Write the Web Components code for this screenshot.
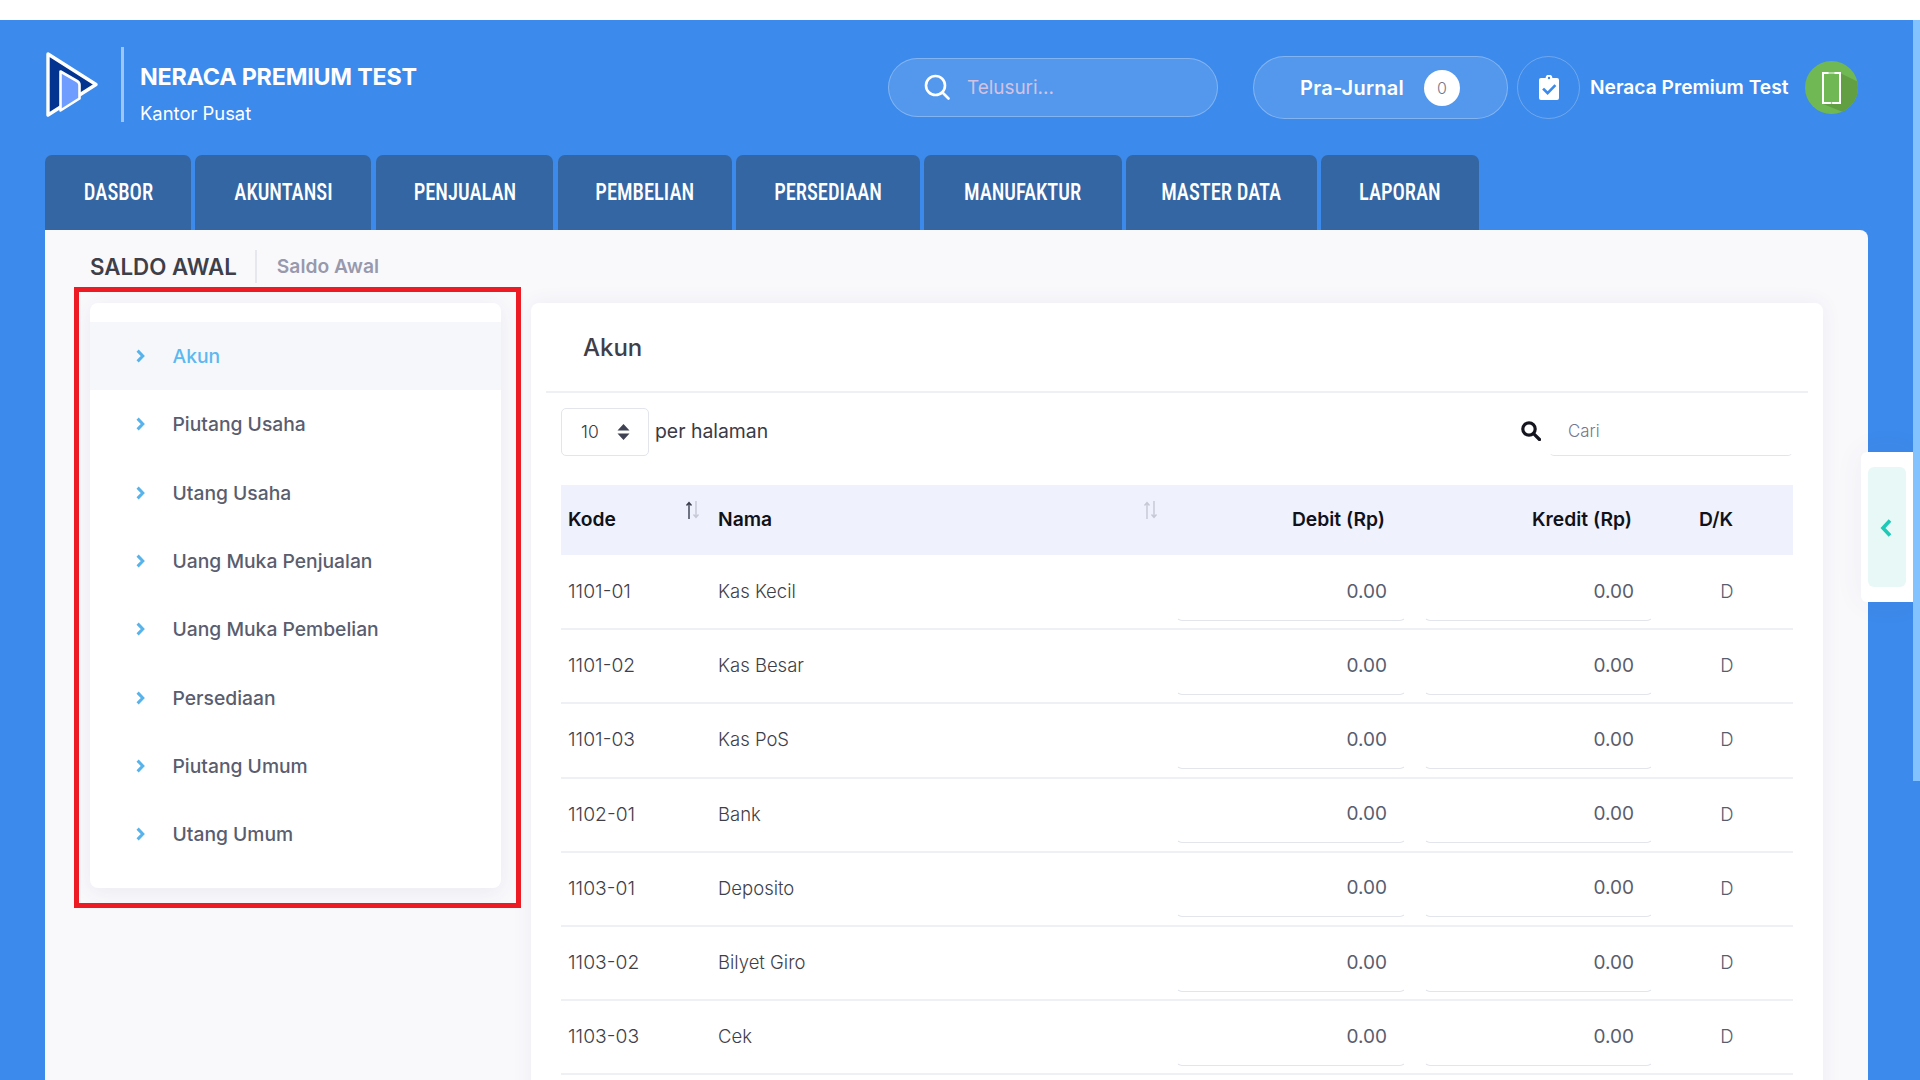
<!DOCTYPE html>
<html lang="id"><head><meta charset="utf-8"><title>Saldo Awal</title>
<style>
html,body{margin:0;padding:0;height:1080px;overflow:hidden;background:#fff;font-family:Inter,"Noto Sans",sans-serif}
</style></head><body>
<np-app>
  <np-header slot="header"></np-header>
  <np-nav slot="nav">
    <np-tab style="width:146px">DASBOR</np-tab><np-tab style="width:176px;margin-right:1px">AKUNTANSI</np-tab><np-tab style="width:177px;margin-right:1px">PENJUALAN</np-tab><np-tab style="width:174px">PEMBELIAN</np-tab><np-tab style="width:184px">PERSEDIAAN</np-tab><np-tab style="width:197.500px">MANUFAKTUR</np-tab><np-tab style="width:191.500px">MASTER DATA</np-tab><np-tab style="width:158px">LAPORAN</np-tab>
  </np-nav>
  <np-page>
    <np-crumb slot="crumb"><span slot="title">SALDO AWAL</span><span slot="sub">Saldo Awal</span></np-crumb>
    <np-sidebar slot="side">
      <np-side-item active>Akun</np-side-item>
      <np-side-item>Piutang Usaha</np-side-item>
      <np-side-item>Utang Usaha</np-side-item>
      <np-side-item>Uang Muka Penjualan</np-side-item>
      <np-side-item>Uang Muka Pembelian</np-side-item>
      <np-side-item>Persediaan</np-side-item>
      <np-side-item>Piutang Umum</np-side-item>
      <np-side-item>Utang Umum</np-side-item>
    </np-sidebar>
    <np-panel slot="main">
      <span slot="title">Akun</span>
      <np-toolbar></np-toolbar>
      <np-thead></np-thead>
      <np-row><span slot="k">1101-01</span><span slot="n">Kas Kecil</span></np-row>
      <np-row><span slot="k">1101-02</span><span slot="n">Kas Besar</span></np-row>
      <np-row><span slot="k">1101-03</span><span slot="n">Kas PoS</span></np-row>
      <np-row><span slot="k">1102-01</span><span slot="n">Bank</span></np-row>
      <np-row><span slot="k">1103-01</span><span slot="n">Deposito</span></np-row>
      <np-row><span slot="k">1103-02</span><span slot="n">Bilyet Giro</span></np-row>
      <np-row><span slot="k">1103-03</span><span slot="n">Cek</span></np-row>
    </np-panel>
  </np-page>
  <np-float slot="float"></np-float>
  <np-scroll slot="float"></np-scroll>
</np-app>
<script>
function def(name, html){
  customElements.define(name, class extends HTMLElement{
    constructor(){super();this.attachShadow({mode:'open'}).innerHTML=html;}
  });
}
const FONT='font-family:Inter,"Noto Sans",sans-serif;';
def('np-app',`<style>
:host{display:block;position:relative;height:1060px;margin-top:20px;background:#3c8aeb;overflow:hidden;${FONT}}
</style><slot name="header"></slot><slot name="nav"></slot><slot></slot><slot name="float"></slot>`);

def('np-header',`<style>
:host{display:flex;align-items:center;height:135px;padding-left:45px;color:#fff;box-sizing:border-box}
.brand{display:flex;align-items:center;width:843px;flex:none;margin-bottom:7px}
.logo{display:block;flex:none}
.div{width:3px;height:75px;background:rgba(255,255,255,.5);margin:0 16px 0 22px;flex:none}
.txt{margin-top:19px}
.t1{font-size:23.3px;font-weight:700;line-height:30px;letter-spacing:-.2px;white-space:nowrap}
.t2{font-size:18.4px;line-height:24px;margin-top:9px;white-space:nowrap}
.search{width:330px;height:59px;box-sizing:border-box;border-radius:30px;background:rgba(255,255,255,.12);border:1px solid rgba(255,255,255,.28);display:flex;align-items:center;padding-left:35px;flex:none;margin-top:-1px}
.search span{color:#d3c2e2;font-size:18.9px;margin-left:17px}
.pra{width:255px;height:63px;margin-left:35px;box-sizing:border-box;border-radius:32px;background:rgba(255,255,255,.12);border:1px solid rgba(255,255,255,.28);display:flex;align-items:center;padding-left:46px;flex:none;font-size:20px;font-weight:600}
.pra b{font-weight:600;width:124px;white-space:nowrap;letter-spacing:.25px}
.badge{width:36px;height:36px;border-radius:50%;background:#fff;color:#74788d;font-size:16px;font-weight:300;display:flex;align-items:center;justify-content:center}
.clip{width:63px;height:63px;margin-left:9px;box-sizing:border-box;border-radius:50%;border:1px solid rgba(255,255,255,.25);display:flex;align-items:center;justify-content:center;flex:none}
.name{width:215px;margin-left:10px;font-size:19.2px;font-weight:600;white-space:nowrap;flex:none;padding-bottom:1px;box-sizing:border-box}
.av{display:block;flex:none}
</style>
<div class="brand">
<svg class="logo" width="54" height="68" viewBox="0 0 54 68"><path d="M3 4 L51 34.5 L3 65 Z" fill="#03348f" stroke="#fff" stroke-width="3.4" stroke-linejoin="round"/><path d="M15.5 21.5 L32 31 Q34.5 32.5 34.5 35 V48.500 L15.500 60.500 Z" fill="#6f9cff" stroke="#fff" stroke-width="2.6" stroke-linejoin="round"/></svg>
<div class="div"></div>
<div class="txt"><div class="t1">NERACA PREMIUM TEST</div><div class="t2">Kantor Pusat</div></div>
</div>
<div class="search"><svg width="26" height="26" viewBox="0 0 26 26" fill="none" stroke="#fff" stroke-width="2.6" stroke-linecap="round"><circle cx="11.5" cy="11.5" r="9.5"/><path d="M18.5 18.5 L24.5 24.5"/></svg><span>Telusuri...</span></div>
<div class="pra"><b>Pra-Jurnal</b><div class="badge">0</div></div>
<div class="clip"><svg width="20" height="25" viewBox="0 0 20 25"><path fill="#fff" d="M2 3h4.6a3.4 3.4 0 0 1 6.8 0H18a2 2 0 0 1 2 2v18a2 2 0 0 1-2 2H2a2 2 0 0 1-2-2V5a2 2 0 0 1 2-2z"/><circle cx="10" cy="3" r="1.2" fill="#3c8aeb"/><path d="M5 14.5l3.6 3.6L15.5 11" fill="none" stroke="#3c8aeb" stroke-width="2.6" stroke-linecap="square"/></svg></div>
<div class="name">Neraca Premium Test</div>
<svg class="av" width="53" height="53" viewBox="0 0 53 53"><defs><clipPath id="c"><circle cx="26.5" cy="26.5" r="26.5"/></clipPath></defs><circle cx="26.5" cy="26.5" r="26.5" fill="#70b854"/><path clip-path="url(#c)" d="M35 12 L60 24 V60 L18 43 Z" fill="#629f43"/><rect x="18" y="12" width="17" height="30" fill="#70b854" stroke="#fff" stroke-width="2"/><rect x="23.5" y="11.500" width="6" height="1" fill="#70b854"/><circle cx="26.5" cy="42" r=".8" fill="#70b854"/></svg>`);

def('np-nav',`<style>:host{display:flex;gap:4px;padding-left:45px;height:75px}</style><slot></slot>`);
def('np-tab',`<style>
:host{display:flex;align-items:center;justify-content:center;background:#3466a3;border-radius:7px 7px 0 0;color:#fff;font-family:Roboto,sans-serif;font-size:24px;font-weight:500;font-stretch:75%;box-sizing:border-box;white-space:nowrap;padding-bottom:1px}
span{display:inline-block;transform:scaleX(.855)}
</style><span><slot></slot></span>`);

def('np-page',`<style>
:host{display:block;margin-left:45px;width:1823px;height:850px;background:#f9f9fc;border-radius:0 8px 0 0;overflow:hidden}
.cols{display:flex;gap:30px;padding:0 45px;align-items:flex-start}
</style><slot name="crumb"></slot><div class="cols"><slot name="side"></slot><slot name="main"></slot></div>`);

def('np-crumb',`<style>
:host{display:flex;align-items:center;height:73px;padding-left:45px;box-sizing:border-box}
.t{font-size:22.3px;font-weight:600;color:#3f3f4a;padding-right:18px;line-height:33px;border-right:2px solid #e7e8ef;white-space:nowrap}
.s{font-size:19.3px;font-weight:600;color:#9899ac;padding:0 0 2px 20px;white-space:nowrap}
</style><div class="t"><slot name="title"></slot></div><div class="s"><slot name="sub"></slot></div>`);

def('np-sidebar',`<style>
:host{display:block;position:relative;width:411px;height:585px;background:#fff;border-radius:8px;padding-top:19px;box-sizing:border-box;box-shadow:0 4px 20px rgba(82,63,105,.08);flex:none}
.mark{position:absolute;left:-16px;top:-16px;right:-20px;bottom:-20px;border:5px solid #ed1c24;pointer-events:none}
</style><slot></slot><div class="mark"></div>`);

customElements.define('np-side-item',class extends HTMLElement{
  constructor(){super();this.attachShadow({mode:'open'}).innerHTML=`<style>
:host{display:flex;align-items:center;height:68.3px;padding-left:46px;box-sizing:border-box;color:#595d6e;font-size:19.3px;font-weight:500}
:host([active]){background:#f6f7fa;color:#5cb8f0}
svg{margin-right:27.500px;flex:none}
</style><svg width="9" height="14" viewBox="0 0 9 14" fill="none" stroke="#57b3ea" stroke-width="3"><path d="M1.6 1.6L6.8 7L1.6 12.4"/></svg><slot></slot>`;}
});

def('np-panel',`<style>
:host{display:block;width:1292px;height:900px;background:#fff;border-radius:8px 8px 0 0;box-shadow:0 0 20px rgba(82,63,105,.07);padding:0 15px;box-sizing:border-box;flex:none}
.h{height:90px;border-bottom:2px solid #eef0f5;box-sizing:border-box;display:flex;align-items:center;padding:0 0 0 37px;font-size:24px;font-weight:500;color:#3f3f4a}
.b{padding:0 15px}
</style><div class="h"><slot name="title"></slot></div><div class="b"><slot></slot></div>`);

def('np-toolbar',`<style>
:host{display:flex;align-items:center;height:48px;margin:15px 0 29px;color:#3a3a46;font-size:19.4px}
.sel{width:88px;height:48px;box-sizing:border-box;border:1px solid #e2e5ec;border-radius:5px;display:flex;align-items:center;padding:0 0 1px 19px;font-size:17.5px;font-weight:300;margin-right:6px}
.sel svg{margin-left:18px}
.lbl{flex:1;padding-bottom:3px}
.ico{margin:0 8px 2px 0}
.inp{width:244px;height:48px;box-sizing:border-box;border:1px solid transparent;border-bottom-color:#e2e5ec;border-radius:5px;display:flex;align-items:center;padding:0 0 2px 18px;font-size:16.8px;font-weight:300;color:#74788d}
</style><div class="sel">10<svg width="13" height="16" viewBox="0 0 13 16" fill="#3f4254"><path d="M6.5 0l6 6.5H.5zM6.5 16L.5 9.500h12z"/></svg></div><div class="lbl">per halaman</div>
<svg class="ico" width="20" height="20" viewBox="0 0 20 20" fill="none" stroke="#15151f" stroke-width="3.2"><circle cx="8" cy="8" r="6.2"/><path d="M12.600 12.600L18.500 18.500" stroke-linecap="round"/></svg><div class="inp">Cari</div>`);

const COLS='grid-template-columns:150px 455px 250px 247px 130px;';
const arrows=(a)=>`<svg width="15" height="18" viewBox="0 0 15 18" fill="none" stroke-width="1.400"><path d="M4 18V2M1.500 4.500L4 1.500L6.500 4.500" stroke="${a}"/><path d="M11 0V16M8.500 13.500L11 16.500L13.500 13.500" stroke="#c6c8d4"/></svg>`;
def('np-thead',`<style>
:host{display:grid;${COLS}height:70px;margin-bottom:1px;background:#eff1fd;color:#111119;font-size:19.3px;font-weight:600;align-items:stretch}
.c{display:flex;align-items:center;justify-content:space-between;box-sizing:border-box;padding-bottom:2px}
.c svg{align-self:flex-start;margin:16px 0 0 0}
.r{justify-content:flex-end;padding-right:31px}
</style><div class="c" style="padding-left:7px;padding-right:11px"><span>Kode</span>${arrows('#3a3d4c')}</div><div class="c" style="padding-left:7px;padding-right:8px"><span>Nama</span>${arrows('#c6c8d4')}</div><div class="c r">Debit (Rp)</div><div class="c r">Kredit (Rp)</div><div class="c" style="padding-left:36px">D/K</div>`);

def('np-row',`<style>
:host{display:grid;${COLS}height:74.2px;border-bottom:2px solid #eef0f5;box-sizing:border-box;color:#3f3f4a;font-size:18.5px;font-weight:300;align-items:center}
.t{padding:0 0 2px 7px;white-space:nowrap}
.k{font-size:19.3px}
.i{height:57px;margin:0 10px;box-sizing:border-box;border:1px solid transparent;border-bottom-color:#e2e5ec;border-radius:6px;display:flex;align-items:center;justify-content:flex-end;padding:0 18px 2px 0;color:#595d6e;font-size:19px;font-weight:400}
.d{text-align:center;color:#595d6e;padding:0 2px 2px 0}
</style><div class="t k"><slot name="k"></slot></div><div class="t"><slot name="n"></slot></div><div class="i">0.00</div><div class="i" style="margin-left:8px">0.00</div><div class="d">D</div>`);

def('np-float',`<style>
:host{position:absolute;left:1861px;top:432px;width:52px;height:150px;background:#fff;border-radius:6px 0 0 6px;box-shadow:0 0 30px rgba(82,63,105,.06);display:flex;align-items:center;padding-left:7px;box-sizing:border-box}
.i{width:38px;height:120px;background:#e8f8f6;border-radius:6px;display:flex;align-items:center;justify-content:center}
svg{margin:2px 0 0 -3px}
</style><div class="i"><svg width="12" height="18" viewBox="0 0 12 18" fill="none" stroke="#1dc9b7" stroke-width="3.600"><path d="M10 1.600L3 9L10 16.400"/></svg></div>`);
def('np-scroll',`<style>:host{position:absolute;right:0;top:0;width:7px;height:761px;background:#82c3ff}</style>`);
</script>
</body></html>
